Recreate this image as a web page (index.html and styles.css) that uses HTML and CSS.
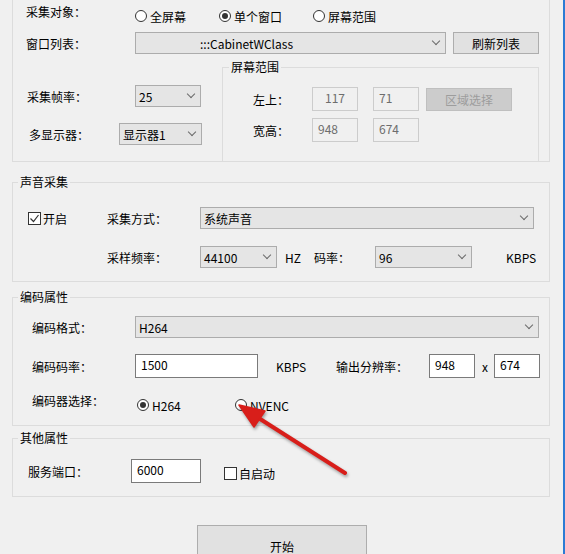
FILE: index.html
```html
<!DOCTYPE html>
<html lang="zh-CN">
<head>
  <meta charset="UTF-8">
  <title>采集设置</title>
  <link rel="stylesheet" href="styles.css">
</head>
<body>
  <div class="window">

    <!-- 视频采集 -->
    <div class="group group-top">
      <div class="row r-target">
        <span class="lbl lbl-target">采集对象：</span>
        <label class="radio radio-full"><i class="dot"></i>全屏幕</label>
        <label class="radio radio-single"><i class="dot on"></i>单个窗口</label>
        <label class="radio"><i class="dot"></i>屏幕范围</label>
      </div>
      <div class="row r-window">
        <span class="lbl lbl-window">窗口列表：</span>
        <div class="combo combo-window"><span>:::CabinetWClass</span></div>
        <button class="btn btn-refresh">刷新列表</button>
      </div>
      <div class="area">
        <div class="area-left">
          <div class="row r-fps">
            <span class="lbl lbl-fps">采集帧率：</span>
            <div class="combo combo-fps"><span>25</span></div>
          </div>
          <div class="row r-monitor">
            <span class="lbl lbl-monitor">多显示器：</span>
            <div class="combo combo-monitor"><span>显示器1</span></div>
          </div>
        </div>
        <div class="range">
          <span class="caption">屏幕范围</span>
          <div class="row r-pos">
            <span class="lbl lbl-pos">左上：</span>
            <div class="field field-left">117</div>
            <div class="field field-gap">71</div>
            <button class="btn btn-region" disabled>区域选择</button>
          </div>
          <div class="row r-size">
            <span class="lbl lbl-pos">宽高：</span>
            <div class="field">948</div>
            <div class="field field-gap">674</div>
          </div>
        </div>
      </div>
    </div>

    <!-- 声音采集 -->
    <div class="group group-sound">
      <span class="caption">声音采集</span>
      <div class="row r-mode">
        <label class="check check-on"><i class="box"><svg width="11" height="11" viewBox="0 0 11 11"><polyline points="1.5,5.5 4.5,8.5 9.5,2" fill="none" stroke="#333" stroke-width="1.2"/></svg></i>开启</label>
        <span class="lbl lbl-mode">采集方式：</span>
        <div class="combo combo-mode"><span>系统声音</span></div>
      </div>
      <div class="row r-rate">
        <span class="lbl lbl-mode">采样频率：</span>
        <div class="combo combo-rate"><span>44100</span></div>
        <span class="unit unit-hz">HZ</span>
        <span class="lbl lbl-bitrate">码率：</span>
        <div class="combo combo-bitrate"><span>96</span></div>
        <span class="unit unit-kbps">KBPS</span>
      </div>
    </div>

    <!-- 编码属性 -->
    <div class="group group-enc">
      <span class="caption">编码属性</span>
      <div class="row r-format">
        <span class="lbl lbl-enc">编码格式：</span>
        <div class="combo combo-format"><span>H264</span></div>
      </div>
      <div class="row r-bitrate">
        <span class="lbl lbl-enc">编码码率：</span>
        <div class="input input-bitrate">1500</div>
        <span class="unit unit-kbps2">KBPS</span>
        <span class="lbl lbl-res">输出分辨率：</span>
        <div class="input input-res">948</div>
        <span class="times">x</span>
        <div class="input input-res">674</div>
      </div>
      <div class="row r-encoder">
        <span class="lbl lbl-enc lbl-encoder">编码器选择：</span>
        <label class="radio radio-h264"><i class="dot on"></i>H264</label>
        <label class="radio"><i class="dot"></i>NVENC</label>
      </div>
    </div>

    <!-- 其他属性 -->
    <div class="group group-other">
      <span class="caption">其他属性</span>
      <div class="row r-port">
        <span class="lbl lbl-port">服务端口：</span>
        <div class="input input-port">6000</div>
        <label class="check check-auto"><i class="box"></i>自启动</label>
      </div>
    </div>

    <button class="btn btn-start">开始</button>

    <!-- 标注箭头 -->
    <svg class="arrow" width="565" height="554" viewBox="0 0 565 554">
      <line x1="345" y1="473" x2="257" y2="417" stroke="#d81e1a" stroke-width="4" stroke-linecap="round"/>
      <polygon points="239,405 265,411 254,427" fill="#d81e1a" stroke="#d81e1a" stroke-width="1.5" stroke-linejoin="round"/>
    </svg>
  </div>
</body>
</html>
```

FILE: styles.css
```css
* {
  box-sizing: border-box;
}

body {
  margin: 0;
  background-color: #f0f0f0;
  font-family: "Noto Sans CJK SC", "Microsoft YaHei", sans-serif;
  font-size: 12px;
  color: #000;
}

.window {
  position: relative;
  width: 565px;
  height: 554px;
  overflow: hidden;
  border-right: 2px solid #2c7bd4;
}

/* 分组框 */
.group {
  width: 538px;
  margin-left: 12px;
  border: 1px solid #dcdcdc;
}

/* 分组标题压在上边框上 */
.caption {
  display: block;
  width: max-content;
  margin: -8px 0 0 5px;
  padding: 0 2px;
  line-height: 14px;
  background-color: #f0f0f0;
}

.row {
  display: flex;
  align-items: center;
}

.lbl, .unit, .times {
  flex: none;
  white-space: nowrap;
}

/* 单选 / 复选 */
.radio, .check {
  display: flex;
  align-items: center;
  flex: none;
  white-space: nowrap;
}

.dot {
  width: 12px;
  height: 12px;
  margin-right: 3px;
  border: 1px solid #333;
  border-radius: 50%;
  background-color: #fff;
  display: inline-flex;
  align-items: center;
  justify-content: center;
}

.dot.on::after {
  content: "";
  width: 6px;
  height: 6px;
  border-radius: 50%;
  background-color: #333;
}

.box {
  width: 13px;
  height: 13px;
  margin-right: 2px;
  border: 1px solid #333;
  background-color: #fff;
  display: inline-flex;
  align-items: center;
  justify-content: center;
}

/* 下拉框 */
.combo {
  flex: none;
  height: 22px;
  padding: 0 6px 0 3px;
  background-color: #e5e5e5;
  border: 1px solid #acacac;
  display: flex;
  align-items: center;
  justify-content: space-between;
  white-space: nowrap;
}

.combo::after {
  content: "";
  width: 5px;
  height: 5px;
  margin-top: -4px;
  border-right: 1px solid #6a6a6a;
  border-bottom: 1px solid #6a6a6a;
  transform: rotate(45deg);
}

/* 按钮 */
.btn {
  flex: none;
  height: 22px;
  padding: 0;
  font: inherit;
  color: #000;
  background-color: #e1e1e1;
  border: 1px solid #adadad;
}

/* 输入框 */
.field, .input {
  flex: none;
  height: 24px;
  padding: 2px 0 0 5px;
  line-height: 16px;
}

.field {
  width: 46px;
  color: #6d6d6d;
  background-color: #f0f0f0;
  border: 1px solid #cccccc;
}

.input {
  background-color: #fff;
  border: 1px solid #7a7a7a;
}

/* 视频采集 */
.group-top {
  height: 162px;
  border-top: none;
  padding: 4px 0 0 13px;
}

.r-target {
  height: 24px;
}

.lbl-target {
  width: 109px;
  margin-bottom: 10px;
}

.radio-full { width: 84px; }
.radio-single { width: 94px; }

.r-window {
  margin-top: 4px;
  height: 22px;
}

.lbl-window { width: 109px; }

.combo-window {
  width: 311px;
  padding-left: 64px;
}

.btn-refresh {
  width: 86px;
  margin-left: 7px;
}

.area {
  display: flex;
  height: 107px;
}

.area-left {
  width: 196px;
  flex: none;
}

.r-fps {
  margin-top: 31px;
  height: 22px;
  padding-left: 1px;
}

.lbl-fps { width: 108px; }
.combo-fps { width: 66px; }

.r-monitor {
  margin-top: 16px;
  height: 22px;
  padding-left: 3px;
}

.lbl-monitor { width: 90px; }
.combo-monitor { width: 83px; }

.range {
  width: 317px;
  height: 94px;
  margin-top: 13px;
  border: 1px solid #dcdcdc;
  border-bottom: none;
}

.range .caption {
  margin-left: 6px;
}

.r-pos {
  margin-top: 13px;
  height: 24px;
  padding-left: 30px;
}

.r-size {
  margin-top: 7px;
  height: 24px;
  padding-left: 30px;
}

.lbl-pos { width: 59px; }
.field-left { padding-left: 12px; }
.field-gap { margin-left: 15px; }

.btn-region {
  width: 86px;
  height: 23px;
  margin-left: 7px;
  color: #9d9d9d;
  background-color: #cccccc;
  border-color: #bfbfbf;
}

/* 声音采集 */
.group-sound {
  margin-top: 20px;
  padding-bottom: 13px;
}

.r-mode {
  margin-top: 18px;
  height: 22px;
  padding-left: 15px;
}

.check-on { width: 79px; }

.lbl-mode { width: 93px; }
.combo-mode { width: 334px; }

.r-rate {
  margin-top: 17px;
  height: 22px;
  padding-left: 94px;
}

.combo-rate { width: 77px; }

.unit-hz {
  width: 29px;
  margin-left: 8px;
}

.lbl-bitrate { width: 61px; }
.combo-bitrate { width: 97px; }
.unit-kbps { margin-left: 34px; }

/* 编码属性 */
.group-enc {
  margin-top: 15px;
  padding-bottom: 9px;
}

.r-format {
  margin-top: 12px;
  height: 22px;
  padding-left: 19px;
}

.lbl-enc { width: 103px; }
.combo-format { width: 404px; }

.r-bitrate {
  margin-top: 16px;
  height: 24px;
  padding-left: 19px;
}

.input-bitrate { width: 123px; }

.unit-kbps2 {
  width: 60px;
  margin-left: 18px;
}

.lbl-res { width: 93px; }
.input-res { width: 46px; }

.times {
  width: 19px;
  padding-left: 7px;
}

.r-encoder {
  margin-top: 16px;
  height: 22px;
  padding-left: 19px;
}

.lbl-encoder { margin-bottom: 10px; }

.radio-h264 {
  width: 98px;
  margin-left: 2px;
}

/* 其他属性 */
.group-other {
  margin-top: 12px;
  padding-bottom: 13px;
}

.r-port {
  margin-top: 14px;
  height: 24px;
  padding-left: 15px;
}

.lbl-port { width: 103px; }
.input-port { width: 70px; }

.check-auto {
  align-self: flex-end;
  margin: 0 0 1px 23px;
}

/* 开始 */
.btn-start {
  display: block;
  width: 170px;
  height: 42px;
  margin: 28px 0 0 197px;
}

.arrow {
  position: absolute;
  left: 0;
  top: 0;
  pointer-events: none;
  filter: drop-shadow(1px 2px 1.5px rgba(0, 0, 0, 0.35));
}
```
